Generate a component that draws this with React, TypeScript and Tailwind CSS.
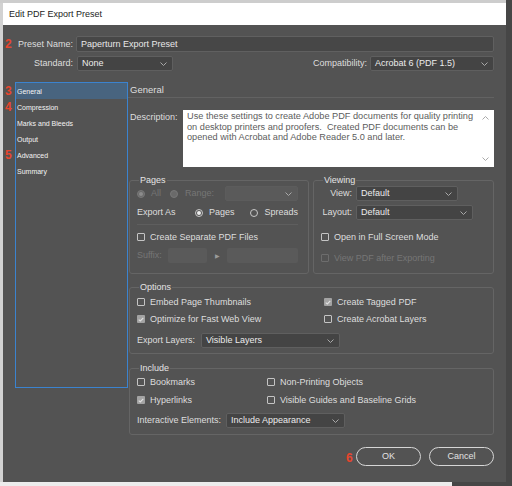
import React from 'react';

function Chevron({ up }: { up?: boolean }) {
  return (
    <svg width="7" height="4" viewBox="0 0 7 4" className="shrink-0">
      <path
        d={up ? 'M0.5 3.5 L3.5 0.5 L6.5 3.5' : 'M0.5 0.5 L3.5 3.5 L6.5 0.5'}
        stroke="#a9a9a9"
        strokeWidth="1"
        fill="none"
      />
    </svg>
  );
}

function Select({ value, className, disabled }: { value: string; className: string; disabled?: boolean }) {
  return (
    <div
      className={`flex h-[15px] items-center justify-between rounded-[2px] border pl-[4px] pr-[5px] ${
        disabled ? 'border-[#5c5c5c] bg-[#5a5a5a] text-[#7c7c7c]' : 'border-[#5f5f5f] bg-[#444444] text-[#ececec]'
      } ${className}`}
    >
      <span className="leading-none">{value}</span>
      <Chevron />
    </div>
  );
}

function Check({ checked, disabled }: { checked?: boolean; disabled?: boolean }) {
  if (checked) {
    return (
      <span className="flex h-[8px] w-[8px] shrink-0 items-center justify-center rounded-[1px] bg-[#a3a3a3]">
        <svg width="6" height="5" viewBox="0 0 6 5">
          <path d="M0.7 2.6 L2.3 4 L5.3 0.8" stroke="#e2e2e2" strokeWidth="1.1" fill="none" />
        </svg>
      </span>
    );
  }
  return (
    <span
      className={`h-[8px] w-[8px] shrink-0 rounded-[1px] border ${
        disabled ? 'border-[#6d6d6d]' : 'border-[#c4c4c4]'
      }`}
    />
  );
}

function Radio({ checked, disabled }: { checked?: boolean; disabled?: boolean }) {
  return (
    <span
      className={`flex h-[8px] w-[8px] shrink-0 items-center justify-center rounded-full border ${
        disabled ? 'border-[#787878] bg-[#6a6a6a]' : 'border-[#c8c8c8]'
      }`}
    >
      {checked && (
        <span className={`h-[4px] w-[4px] rounded-full ${disabled ? 'bg-[#8c8c8c]' : 'bg-[#eeeeee]'}`} />
      )}
    </span>
  );
}

function CheckRow({ label, checked, disabled }: { label: string; checked?: boolean; disabled?: boolean }) {
  return (
    <div className="flex h-[14px] items-center gap-[5px]">
      <Check checked={checked} disabled={disabled} />
      <span className={disabled ? 'text-[#767676]' : ''}>{label}</span>
    </div>
  );
}

function Num({ n, className }: { n: string; className: string }) {
  return (
    <span className={`absolute text-[12px] font-bold leading-none text-[#e8452d] ${className}`}>{n}</span>
  );
}

const sections = ['General', 'Compression', 'Marks and Bleeds', 'Output', 'Advanced', 'Summary'];
const nums: Record<string, string> = { General: '3', Compression: '4', Advanced: '5' };

export default function App() {
  return (
    <div className="flex h-[486px] w-[512px] flex-col overflow-hidden bg-[#464646] font-['Liberation_Sans',Arial,sans-serif] text-[9px] leading-none text-[#dedede]">
      <div className="h-[3px] w-[506px] shrink-0 bg-[#cdcdcd]" />
      <div className="flex shrink-0">
        <div className="h-[479px] w-[3px] bg-[#d2d2d2]" />
        <div className="flex h-[479px] w-[503px] flex-col">
          {/* title bar */}
          <div className="flex h-[22px] shrink-0 items-center bg-white pl-[6px] text-[9px] text-[#1c1c1c]">
            Edit PDF Export Preset
          </div>

          <div className="flex flex-1 flex-col bg-[#535353] px-[12px] pt-[11px]">
            {/* preset name */}
            <div className="flex h-[16px] items-center">
              <div className="relative w-[58px] text-right">
                <Num n="2" className="left-[-10px] top-[-2px]" />
                Preset Name:
              </div>
              <div className="ml-[3px] flex h-[16px] flex-1 items-center rounded-[2px] border border-[#606060] bg-[#474747] pl-[4px] text-[#e8e8e8]">
                Paperturn Export Preset
              </div>
            </div>

            {/* standard / compatibility */}
            <div className="mt-[4px] flex h-[15px] items-center justify-between">
              <div className="flex items-center">
                <div className="w-[58px] text-right">Standard:</div>
                <Select value="None" className="ml-[4px] w-[96px]" />
              </div>
              <div className="flex items-center">
                <span>Compatibility:</span>
                <Select value="Acrobat 6 (PDF 1.5)" className="ml-[3px] w-[124px]" />
              </div>
            </div>

            {/* main area */}
            <div className="mt-[11px] flex items-start">
              <div className="h-[306px] w-[113px] shrink-0 border border-[#3b83cf]">
                {sections.map((s, i) => (
                  <div
                    key={s}
                    className={`relative flex h-[16px] items-center pl-[1px] text-[7px] text-[#f4f4f4] ${
                      i === 0 ? 'bg-[#48647f]' : ''
                    }`}
                  >
                    {nums[s] && <Num n={nums[s]} className="left-[-11px] top-[2px]" />}
                    {s}
                  </div>
                ))}
              </div>

              <div className="flex flex-1 flex-col">
                <div className="mt-[1px] flex h-[15px] items-center border-b border-[#626262] pl-[2px] text-[9.5px]">
                  General
                </div>

                {/* description */}
                <div className="mt-[12px] flex">
                  <div className="w-[55px] pl-[2px] pt-[3px]">Description:</div>
                  <div className="relative h-[57px] flex-1 whitespace-nowrap bg-white pl-[4px] pt-[1px] text-[9.2px] leading-[10.5px] text-[#5c5c5c]">
                    Use these settings to create Adobe PDF documents for quality printing
                    <br />
                    on desktop printers and proofers.&nbsp; Created PDF documents can be
                    <br />
                    opened with Acrobat and Adobe Reader 5.0 and later.
                    <span className="absolute right-[5px] top-[6px]">
                      <Chevron up />
                    </span>
                    <span className="absolute bottom-[6px] right-[5px]">
                      <Chevron />
                    </span>
                  </div>
                </div>

                {/* pages / viewing */}
                <div className="mt-[7px] flex gap-[4px] pl-[1px]">
                  <fieldset className="w-[180px] rounded-[3px] border border-[#656565] pb-[8px] pl-[7px] pr-[10px]">
                    <legend className="ml-[2px] px-[1px] text-[9px] leading-[12px] text-[#e4e4e4]">Pages</legend>
                    <div className="flex h-[15px] items-center text-[#767676]">
                      <Radio checked disabled />
                      <span className="ml-[6px]">All</span>
                      <span className="ml-[9px]">
                        <Radio disabled />
                      </span>
                      <span className="ml-[7px]">Range:</span>
                      <Select value="" disabled className="ml-auto w-[73px]" />
                    </div>
                    <div className="mt-[4px] flex h-[15px] items-center">
                      <span className="w-[58px]">Export As</span>
                      <Radio checked />
                      <span className="ml-[6px]">Pages</span>
                      <span className="ml-auto flex items-center">
                        <Radio />
                        <span className="ml-[6px]">Spreads</span>
                      </span>
                    </div>
                    <div className="mt-[4px] h-px bg-[#5e5e5e]" />
                    <div className="mt-[5px]">
                      <CheckRow label="Create Separate PDF Files" />
                    </div>
                    <div className="mt-[4px] flex h-[15px] items-center text-[#767676]">
                      <span className="w-[31px]">Suffix:</span>
                      <span className="h-[15px] w-[39px] rounded-[2px] bg-[#5a5a5a]" />
                      <span className="flex flex-1 justify-center text-[6px] text-[#9a9a9a]">▶</span>
                      <span className="h-[15px] w-[71px] rounded-[2px] bg-[#5a5a5a]" />
                    </div>
                  </fieldset>

                  <fieldset className="flex-1 rounded-[3px] border border-[#656565] pb-[8px] pl-[7px] pr-[8px]">
                    <legend className="ml-[2px] px-[1px] text-[9px] leading-[12px] text-[#e4e4e4]">Viewing</legend>
                    <div className="flex h-[15px] items-center">
                      <span className="w-[31px] text-right">View:</span>
                      <Select value="Default" className="ml-[4px] w-[102px]" />
                    </div>
                    <div className="mt-[4px] flex h-[15px] items-center">
                      <span className="w-[31px] text-right">Layout:</span>
                      <Select value="Default" className="ml-[4px] w-[117px]" />
                    </div>
                    <div className="mt-[10px]">
                      <CheckRow label="Open in Full Screen Mode" />
                    </div>
                    <div className="mt-[7px]">
                      <CheckRow label="View PDF after Exporting" disabled />
                    </div>
                  </fieldset>
                </div>

                {/* options */}
                <fieldset className="ml-[1px] mt-[7px] rounded-[3px] border border-[#656565] pb-[5px] pl-[7px] pr-[8px]">
                  <legend className="ml-[2px] px-[1px] text-[9px] leading-[12px] text-[#e4e4e4]">Options</legend>
                  <div className="mt-[2px] grid grid-cols-[187px_1fr] gap-y-[3px]">
                    <CheckRow label="Embed Page Thumbnails" />
                    <CheckRow label="Create Tagged PDF" checked />
                    <CheckRow label="Optimize for Fast Web View" checked />
                    <CheckRow label="Create Acrobat Layers" />
                  </div>
                  <div className="mt-[7px] flex h-[15px] items-center">
                    <span>Export Layers:</span>
                    <Select value="Visible Layers" className="ml-[6px] w-[139px]" />
                  </div>
                </fieldset>

                {/* include */}
                <fieldset className="ml-[1px] mt-[8px] rounded-[3px] border border-[#656565] pb-[6px] pl-[7px] pr-[8px]">
                  <legend className="ml-[2px] px-[1px] text-[9px] leading-[12px] text-[#e4e4e4]">Include</legend>
                  <div className="mt-[1px] grid grid-cols-[130px_1fr] gap-y-[4px]">
                    <CheckRow label="Bookmarks" />
                    <CheckRow label="Non-Printing Objects" />
                    <CheckRow label="Hyperlinks" checked />
                    <CheckRow label="Visible Guides and Baseline Grids" />
                  </div>
                  <div className="mt-[6px] flex h-[15px] items-center">
                    <span>Interactive Elements:</span>
                    <Select value="Include Appearance" className="ml-[5px] w-[119px]" />
                  </div>
                </fieldset>
              </div>
            </div>

            {/* buttons */}
            <div className="mt-[12px] flex justify-end gap-[8px]">
              <div className="relative flex h-[19px] w-[65px] items-center justify-center rounded-full border-[1.5px] border-[#d6d6d6] text-[#e2e2e2]">
                <Num n="6" className="left-[-11px] top-[4px]" />
                OK
              </div>
              <div className="flex h-[19px] w-[65px] items-center justify-center rounded-full border-[1.5px] border-[#d6d6d6] text-[#e2e2e2]">
                Cancel
              </div>
            </div>
          </div>
        </div>
      </div>
      <div className="h-[4px] w-[452px] shrink-0 bg-[#ececec]" />
    </div>
  );
}
